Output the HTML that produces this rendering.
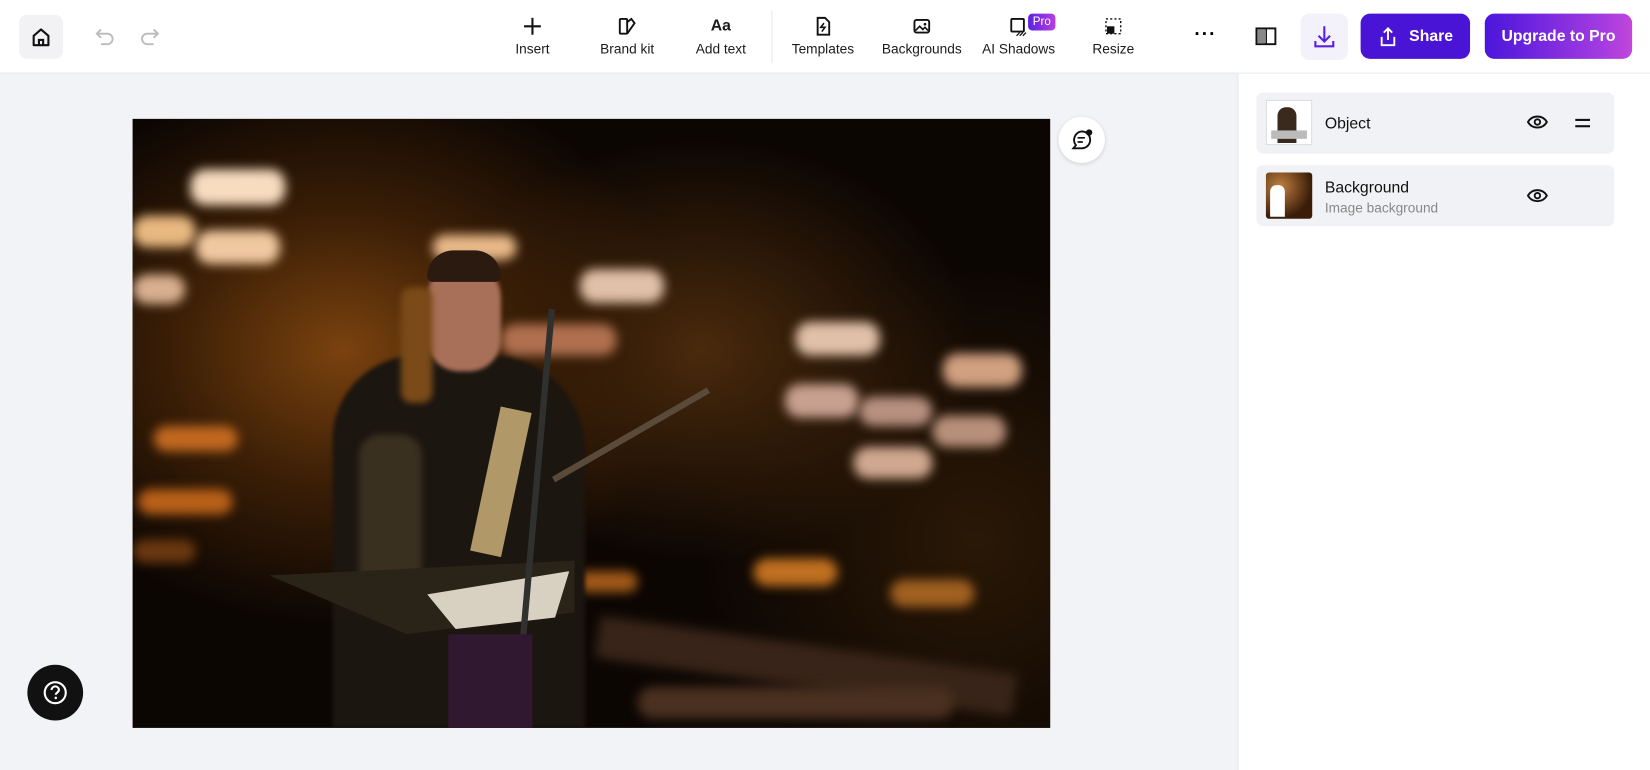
<!DOCTYPE html>
<html><head><meta charset="utf-8"><style>
*{box-sizing:border-box;margin:0;padding:0}
html,body{width:1650px;height:770px;overflow:hidden;background:#f2f3f6;font-family:"Liberation Sans",sans-serif}
#w{width:1568px;height:732px;transform:scale(1.0523,1.0519);transform-origin:0 0;position:relative;background:#f2f3f6}
.top{position:absolute;left:0;top:0;width:1568px;height:70px;background:#fff;border-bottom:1px solid #e6e7eb}
.tb{position:absolute;top:15px;text-align:center;font-size:13px;color:#1a1a1a;width:90px}
.tb svg{display:block;margin:0 auto 4px;width:20px;height:20px}
.home{position:absolute;left:18px;top:14px;width:42px;height:42px;border-radius:8px;background:#f2f2f4}
.btn{position:absolute;top:13px;height:43px;border-radius:9px;color:#fff;font-size:15px;font-weight:bold;display:flex;align-items:center;justify-content:center}
.right{position:absolute;left:1176px;top:70px;width:392px;height:662px;background:#fff;border-left:1px solid #e6e7eb}
.layer{position:absolute;left:17px;width:340px;background:#f1f2f5;border-radius:6px}
.photo{position:absolute;left:126px;top:113px;width:872px;height:579px;overflow:hidden;
background:radial-gradient(ellipse 330px 260px at 200px 220px,#7a420e 0%,#3a1e06 50%,rgba(15,8,3,0) 100%),radial-gradient(ellipse 260px 200px at 540px 220px,#4a2a0c 0%,rgba(15,8,3,0) 100%),radial-gradient(ellipse 260px 260px at 800px 400px,#2a1806,rgba(0,0,0,0)),#0c0603}
.b{position:absolute;border-radius:14px;filter:blur(5px)}
</style></head><body><div id="w">
<div class="top">
 <div class="home"><svg width="42" height="42" viewBox="0 0 42 42"><path d="M14 20l7-6 7 6v9h-14z" fill="none" stroke="#111" stroke-width="2" stroke-linejoin="round"/><path d="M19 29v-5h4v5" fill="none" stroke="#111" stroke-width="2"/></svg></div>
 <svg style="position:absolute;left:90px;top:24px" width="64" height="20" viewBox="0 0 64 20"><path d="M6 4L2 8l4 4M2 8h10a5 5 0 010 10h-6" fill="none" stroke="#bbb" stroke-width="1.8"/><path d="M56 4l4 4-4 4M60 8H50a5 5 0 000 10h6" fill="none" stroke="#bbb" stroke-width="1.8"/></svg>
 <div class="tb" style="left:461px"><svg viewBox="0 0 20 20"><path d="M10 2v16M2 10h16" stroke="#111" stroke-width="2"/></svg>Insert</div>
 <div class="tb" style="left:551px"><svg viewBox="0 0 20 20"><rect x="3" y="3" width="7" height="14" rx="1" fill="none" stroke="#111" stroke-width="1.8"/><path d="M10 6l4-3 3 4-7 10" fill="none" stroke="#111" stroke-width="1.8"/></svg>Brand kit</div>
 <div class="tb" style="left:640px"><div style="font-size:15px;font-weight:bold;height:24px;line-height:20px">Aa</div>Add text</div>
 <div style="position:absolute;left:733px;top:10px;width:1px;height:50px;background:#e6e7eb"></div>
 <div class="tb" style="left:737px"><svg viewBox="0 0 20 20"><path d="M5 2h7l4 4v12H5z" fill="none" stroke="#111" stroke-width="1.8"/><path d="M11 7l-3 4h4l-3 4" fill="none" stroke="#111" stroke-width="1.5"/></svg>Templates</div>
 <div class="tb" style="left:831px"><svg viewBox="0 0 20 20"><rect x="3" y="4" width="14" height="12" rx="2" fill="none" stroke="#111" stroke-width="1.8"/><path d="M4 14l4-4 3 3 2-2 3 3" fill="none" stroke="#111" stroke-width="1.5"/><circle cx="13" cy="8" r="1.3" fill="#111"/></svg>Backgrounds</div>
 <div class="tb" style="left:923px"><svg viewBox="0 0 20 20"><rect x="3" y="3" width="12" height="12" rx="1" fill="none" stroke="#111" stroke-width="1.8"/><path d="M8 19l3-3M11 19l3-3M14 19l3-3" stroke="#111" stroke-width="1.2"/></svg>AI Shadows</div>
 <div style="position:absolute;left:977px;top:13px;width:26px;height:16px;border-radius:4px;background:linear-gradient(90deg,#5b21e0,#b93fe0);color:#fff;font-size:11px;text-align:center;line-height:16px">Pro</div>
 <div class="tb" style="left:1013px"><svg viewBox="0 0 20 20"><rect x="3" y="3" width="14" height="14" fill="none" stroke="#111" stroke-width="1.3" stroke-dasharray="2 2"/><rect x="4" y="10" width="7" height="7" fill="#111"/></svg>Resize</div>
 <div style="position:absolute;left:1135px;top:22px;font-size:18px;font-weight:bold;letter-spacing:1px">···</div>
 <svg style="position:absolute;left:1192px;top:24px" width="22" height="22" viewBox="0 0 22 22"><rect x="2" y="3" width="18" height="15" fill="none" stroke="#111" stroke-width="1.8"/><path d="M11 3v15" stroke="#111" stroke-width="2"/><rect x="3" y="4" width="8" height="13" fill="#888"/></svg>
 <div style="position:absolute;left:1236px;top:13px;width:45px;height:44px;border-radius:8px;background:#f3f2fa"><svg width="45" height="44" viewBox="0 0 45 44"><path d="M22.5 12v14M17 21l5.5 5.5L28 21M14 26v5h17v-5" fill="none" stroke="#5b21e0" stroke-width="2"/></svg></div>
 <div class="btn" style="left:1293px;width:104px;background:#4a14d6"><svg width="20" height="20" viewBox="0 0 20 20" style="margin-right:10px"><path d="M10 2v11M6 6l4-4 4 4M4 10v8h12v-8" fill="none" stroke="#fff" stroke-width="1.8"/></svg>Share</div>
 <div class="btn" style="left:1411px;width:140px;background:linear-gradient(90deg,#4b16dc,#a43be0 80%,#c246dc)">Upgrade to Pro</div>
</div>

<div class="photo">
 <div class="b" style="left:55px;top:48px;width:90px;height:34px;background:#f7dcc0"></div>
 <div class="b" style="left:0;top:92px;width:60px;height:30px;background:#e8b880"></div>
 <div class="b" style="left:60px;top:106px;width:80px;height:32px;background:#f0c8a0"></div>
 <div class="b" style="left:0;top:148px;width:50px;height:28px;background:#d8b090"></div>
 <div class="b" style="left:285px;top:110px;width:80px;height:24px;background:#e8b888"></div>
 <div class="b" style="left:425px;top:143px;width:80px;height:32px;background:#e0c0a8"></div>
 <div class="b" style="left:350px;top:195px;width:110px;height:30px;background:#b07050"></div>
 <div class="b" style="left:630px;top:193px;width:80px;height:32px;background:#e0c0a8"></div>
 <div class="b" style="left:770px;top:223px;width:75px;height:32px;background:#d0a080"></div>
 <div class="b" style="left:620px;top:252px;width:70px;height:32px;background:#c8a090"></div>
 <div class="b" style="left:690px;top:264px;width:70px;height:28px;background:#b89080"></div>
 <div class="b" style="left:760px;top:282px;width:70px;height:30px;background:#b8907a"></div>
 <div class="b" style="left:685px;top:312px;width:75px;height:30px;background:#d0a890"></div>
 <div class="b" style="left:20px;top:292px;width:80px;height:24px;background:#c06820"></div>
 <div class="b" style="left:5px;top:352px;width:90px;height:24px;background:#b86018"></div>
 <div class="b" style="left:0;top:400px;width:60px;height:22px;background:#6a3810"></div>
 <div class="b" style="left:590px;top:418px;width:80px;height:26px;background:#c07020"></div>
 <div class="b" style="left:720px;top:438px;width:80px;height:26px;background:#a06020"></div>
 <div class="b" style="left:420px;top:430px;width:60px;height:20px;background:#a05818"></div>
 <div class="b" style="left:440px;top:500px;width:400px;height:40px;background:#382418;border-radius:4px;transform:rotate(8deg)"></div>
 <div class="b" style="left:480px;top:540px;width:300px;height:30px;background:#4a3020"></div>
 <div style="position:absolute;left:190px;top:225px;width:240px;height:354px;background:#1c1610;border-radius:80px 90px 0 0;filter:blur(2px)"></div>
 <div style="position:absolute;left:215px;top:300px;width:60px;height:160px;background:#3a3020;border-radius:20px;filter:blur(3px)"></div>
 <div style="position:absolute;left:280px;top:135px;width:70px;height:105px;background:#a87058;border-radius:35px 35px 30px 30px;filter:blur(2px)"></div>
 <div style="position:absolute;left:280px;top:125px;width:70px;height:30px;background:#2a1a10;border-radius:30px 30px 6px 6px"></div>
 <div style="position:absolute;left:255px;top:160px;width:30px;height:110px;background:#7a4a18;border-radius:10px;filter:blur(3px)"></div>
 <div style="position:absolute;left:335px;top:275px;width:30px;height:140px;background:#b09868;transform:rotate(12deg)"></div>
 <div style="position:absolute;left:130px;top:420px;width:290px;height:70px;background:#2a2418;clip-path:polygon(0 20%,100% 0,100% 70%,45% 100%)"></div>
 <div style="position:absolute;left:280px;top:430px;width:135px;height:55px;background:#d8d0c0;clip-path:polygon(0 40%,100% 0,90% 80%,20% 100%)"></div>
 <div style="position:absolute;left:400px;top:340px;width:170px;height:6px;background:#5a4a3a;transform:rotate(-30deg);transform-origin:left"></div>
 <div style="position:absolute;left:378px;top:180px;width:6px;height:400px;background:#30302e;transform:rotate(5deg)"></div>
 <div style="position:absolute;left:300px;top:490px;width:80px;height:89px;background:#301830"></div>
</div>
<div style="position:absolute;left:1006px;top:111px;width:44px;height:44px;border-radius:50%;background:#fff;box-shadow:0 1px 4px rgba(0,0,0,.15)"><svg width="44" height="44" viewBox="0 0 44 44"><path d="M22 14a8 8 0 110 16h-8l2.5-3A8 8 0 0122 14z" fill="none" stroke="#111" stroke-width="1.8"/><path d="M18 20h7M18 24h5" stroke="#111" stroke-width="1.6"/><circle cx="29" cy="15" r="3" fill="#111"/></svg></div>
<div style="position:absolute;left:26px;top:632px;width:53px;height:53px;border-radius:50%;background:#111"><svg width="53" height="53" viewBox="0 0 53 53"><circle cx="26.5" cy="26.5" r="10" fill="none" stroke="#fff" stroke-width="2"/><path d="M23 24a3.5 3.5 0 117 0c0 2-3 2.5-3 4.5" fill="none" stroke="#fff" stroke-width="2"/><circle cx="27" cy="31.5" r="1.2" fill="#fff"/></svg></div>

<div class="right">
 <div class="layer" style="top:18px;height:58px">
  <div style="position:absolute;left:9px;top:7px;width:44px;height:43px;background:#fff;border:1px solid #ddd"><div style="position:absolute;left:10px;top:6px;width:18px;height:34px;background:#3a2a1e;border-radius:8px 8px 0 0"></div><div style="position:absolute;left:4px;top:28px;width:34px;height:8px;background:#bbb"></div></div>
  <div style="position:absolute;left:65px;top:21px;font-size:15px;color:#111">Object</div>
  <svg style="position:absolute;left:257px;top:20px" width="20" height="16" viewBox="0 0 20 16"><path d="M1 8c4-7 14-7 18 0-4 7-14 7-18 0z" fill="none" stroke="#111" stroke-width="1.8"/><circle cx="10" cy="8" r="2.6" fill="none" stroke="#111" stroke-width="1.8"/></svg>
  <div style="position:absolute;left:303px;top:25px;width:14px;height:2px;background:#111"></div><div style="position:absolute;left:303px;top:31px;width:14px;height:2px;background:#111"></div>
 </div>
 <div class="layer" style="top:87px;height:58px">
  <div style="position:absolute;left:9px;top:7px;width:44px;height:44px;border-radius:3px;background:radial-gradient(circle at 30% 30%,#c08040,#3a1c08 70%)"><div style="position:absolute;left:4px;top:12px;width:14px;height:30px;background:#fff;border-radius:6px 6px 0 0"></div></div>
  <div style="position:absolute;left:65px;top:13px;font-size:15px;color:#111">Background</div>
  <div style="position:absolute;left:65px;top:33px;font-size:13px;color:#888">Image background</div>
  <svg style="position:absolute;left:257px;top:21px" width="20" height="16" viewBox="0 0 20 16"><path d="M1 8c4-7 14-7 18 0-4 7-14 7-18 0z" fill="none" stroke="#111" stroke-width="1.8"/><circle cx="10" cy="8" r="2.6" fill="none" stroke="#111" stroke-width="1.8"/></svg>
 </div>
</div>
</div></body></html>
